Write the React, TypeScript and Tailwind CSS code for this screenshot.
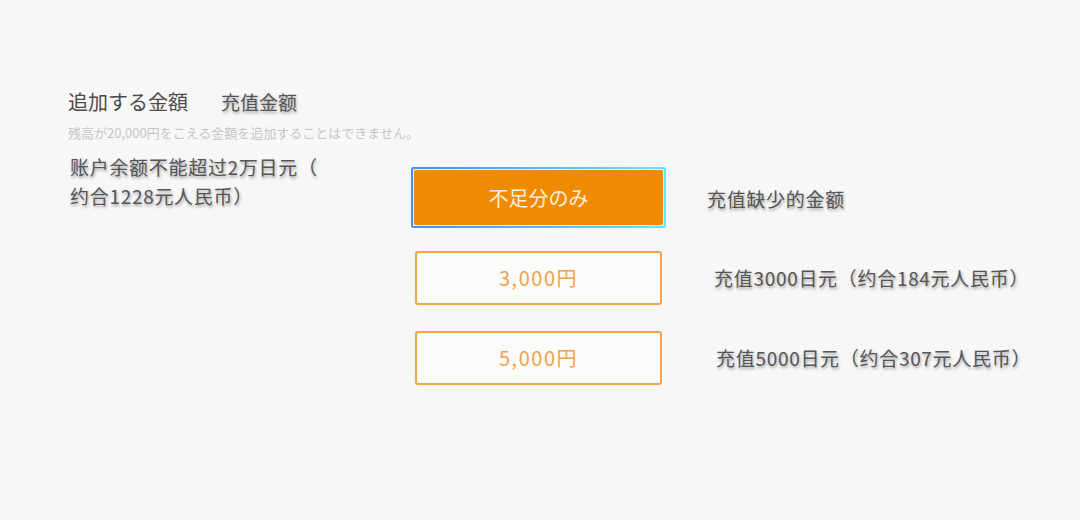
import React from 'react';

const cjk = "font-['Noto_Sans_CJK_JP','Noto_Sans',sans-serif]";
const note = `${cjk} text-[19px] tracking-[0.7px] text-[#555] [text-shadow:1px_2px_3px_rgba(0,0,0,0.35)]`;

type Option = { label: string; hint: string; hintGap: string; mt: string };

const options: Option[] = [
  { label: '3,000円', hint: '充值3000日元（约合184元人民币）', hintGap: 'ml-[52px]', mt: 'mt-[23px]' },
  { label: '5,000円', hint: '充值5000日元（约合307元人民币）', hintGap: 'ml-[54px]', mt: 'mt-[26px]' },
];

export default function App() {
  return (
    <div className={`w-[1080px] h-[520px] bg-[#f7f7f7] pl-[68px] pt-[88px] ${cjk}`}>
      {/* section title */}
      <div className="flex items-center h-[28px]">
        <span className="text-[20px] text-[#4a4a4a]">追加する金額</span>
        <span className={`${note} ml-[33px] tracking-normal`}>充值金额</span>
      </div>
      <p className="mt-[8px] text-[13px] leading-[18px] text-[#c6c6c6]">
        残高が20,000円をこえる金額を追加することはできません。
      </p>

      <div className="flex mt-[10px]">
        <div className={`${note} w-[343px] pl-[2px] leading-[29px]`}>
          账户余额不能超过2万日元（
          <br />
          约合1228元人民币）
        </div>

        <div className="flex flex-col pt-[15px]">
          {/* focused option */}
          <div className="flex items-center">
            <div className="w-[255px] h-[61px] p-[2px] rounded-[2px] bg-gradient-to-r from-[#4a8fe6] via-[#5fb4f2] to-[#66e6ff]">
              <div className="w-full h-full p-[1px] bg-[#dff0ff]">
                <button className={`w-full h-full rounded-[2px] bg-[#f08a00] text-[20px] text-[#fcefdc] ${cjk}`}>
                  不足分のみ
                </button>
              </div>
            </div>
            <span className={`${note} ml-[41px] mt-[3px]`}>充值缺少的金额</span>
          </div>

          {options.map((o) => (
            <div key={o.label} className={`flex items-center ${o.mt}`}>
              <button className={`ml-[4px] w-[247px] h-[54px] rounded-[3px] border-2 border-[#f3a54a] bg-[#fbfbfb] text-[20px] tracking-[1.5px] text-[#f0a04a] ${cjk}`}>
                {o.label}
              </button>
              <span className={`${note} ${o.hintGap}`}>{o.hint}</span>
            </div>
          ))}
        </div>
      </div>
    </div>
  );
}
